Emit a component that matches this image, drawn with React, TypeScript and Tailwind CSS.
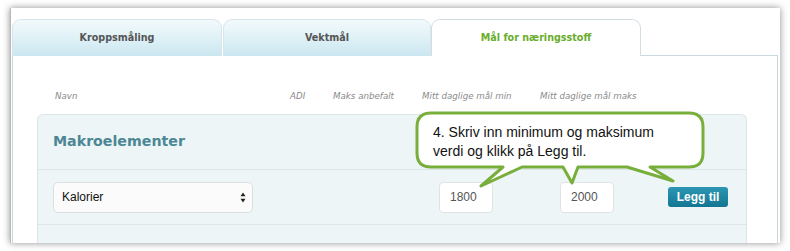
import React from 'react';

const verdana = { fontFamily: '"DejaVu Sans", Verdana, sans-serif' };
const helv = { fontFamily: '"Liberation Sans", Arial, Helvetica, sans-serif' };

const InactiveTab: React.FC<{ label: string; width: string }> = ({ label, width }) => (
  <div
    className={`${width} h-[37px] flex items-center justify-center rounded-t-[9px] border border-b-0 border-[#d6e6ec] bg-gradient-to-b from-[#f3fafc] to-[#cbe7f1] text-[9.6px] font-bold text-[#555]`}
    style={verdana}
  >
    {label}
  </div>
);

const SelectArrows = () => (
  <svg width="6" height="11" viewBox="0 0 6 11">
    <path d="M3 0.5 L5.5 4.2 H0.5 Z" fill="#222" />
    <path d="M3 10.5 L5.5 6.8 H0.5 Z" fill="#222" />
  </svg>
);

const NumberBox: React.FC<{ value: string }> = ({ value }) => (
  <div
    className="w-[54px] h-[31px] rounded-[4px] border border-[#dfe3e4] bg-white flex items-center pl-[10px] text-[12px] text-[#555]"
    style={helv}
  >
    {value}
  </div>
);

export default function App() {
  return (
    <div className="relative w-[790px] h-[251px] bg-white overflow-hidden">
      {/* screenshot frame */}
      <div className="ml-[10px] mt-[8px] w-[770px] h-[235px] bg-white border-l border-[#b9b9b9] shadow-[0_0_7px_rgba(0,0,0,0.45)] flex flex-col overflow-hidden">
        {/* tabs */}
        <div className="h-[48px] shrink-0 flex items-end pl-[1px]">
          <InactiveTab label="Kroppsmåling" width="w-[210px]" />
          <div className="w-[1px]" />
          <InactiveTab label="Vektmål" width="w-[208px]" />
          <div
            className="w-[210px] h-[37px] flex items-center justify-center rounded-t-[9px] border border-b-0 border-[#d3dde2] bg-white text-[9.6px] font-bold text-[#69ad2b]"
            style={verdana}
          >
            Mål for næringsstoff
          </div>
          <div className="flex-1 h-[1px] bg-[#c9d7df] mr-[2px]" />
        </div>

        {/* content panel */}
        <div className="flex-1 min-h-0 overflow-hidden ml-[1px] mr-[2px] border-l border-r border-[#c9d7df] bg-white">
          {/* column labels */}
          <div
            className="h-[58px] flex items-end pb-[11px] pl-[42px] text-[8.7px] italic text-[#8a8a8a]"
            style={verdana}
          >
            <div className="w-[235px]">Navn</div>
            <div className="w-[43px]">ADI</div>
            <div className="w-[89px]">Maks anbefalt</div>
            <div className="w-[118px]">Mitt daglige mål min</div>
            <div>Mitt daglige mål maks</div>
          </div>

          {/* makroelementer */}
          <div className="ml-[24px] w-[710px] h-[140px] rounded-t-[6px] border border-b-0 border-[#dbe6e9] bg-[#eef5f6]">
            <div className="h-[55px] flex items-center pl-[15px] border-b border-[#dbe6e9]">
              <h3 className="text-[14.2px] font-bold text-[#4b8794]" style={verdana}>
                Makroelementer
              </h3>
            </div>
            <div className="h-[55px] flex items-center pl-[15px] border-b border-[#dbe6e9]">
              <div
                className="w-[200px] h-[31px] rounded-[5px] border border-[#dcdfe0] bg-[#fbfbfb] flex items-center justify-between pl-[8px] pr-[6px] text-[12px] text-[#111]"
                style={helv}
              >
                <span>Kalorier</span>
                <SelectArrows />
              </div>
              <div className="ml-[186px]">
                <NumberBox value="1800" />
              </div>
              <div className="ml-[67px]">
                <NumberBox value="2000" />
              </div>
              <button
                className="ml-[54px] w-[60px] h-[20px] rounded-[3px] bg-gradient-to-b from-[#2b96b3] to-[#137793] text-white text-[12px] font-bold leading-none"
                style={helv}
              >
                Legg til
              </button>
            </div>
          </div>
        </div>
      </div>

      {/* callout bubble */}
      <svg className="absolute left-0 top-0" width="790" height="251" viewBox="0 0 790 251">
        <path
          d="M431 113 H689 Q703 113 703 127 V153 Q703 167 689 167 H650 L673 181 L627 167 H578 L572 183 L563 167 H522 L481 186 L503 167 H431 Q417 167 417 153 V127 Q417 113 431 113 Z"
          fill="#fff"
          stroke="#78ae3b"
          strokeWidth="3"
          strokeLinejoin="round"
        />
      </svg>
      <div
        className="absolute left-[433px] top-[123px] text-[14px] leading-[19px] text-[#111]"
        style={helv}
      >
        4. Skriv inn minimum og maksimum
        <br />
        verdi og klikk på Legg til.
      </div>
    </div>
  );
}
